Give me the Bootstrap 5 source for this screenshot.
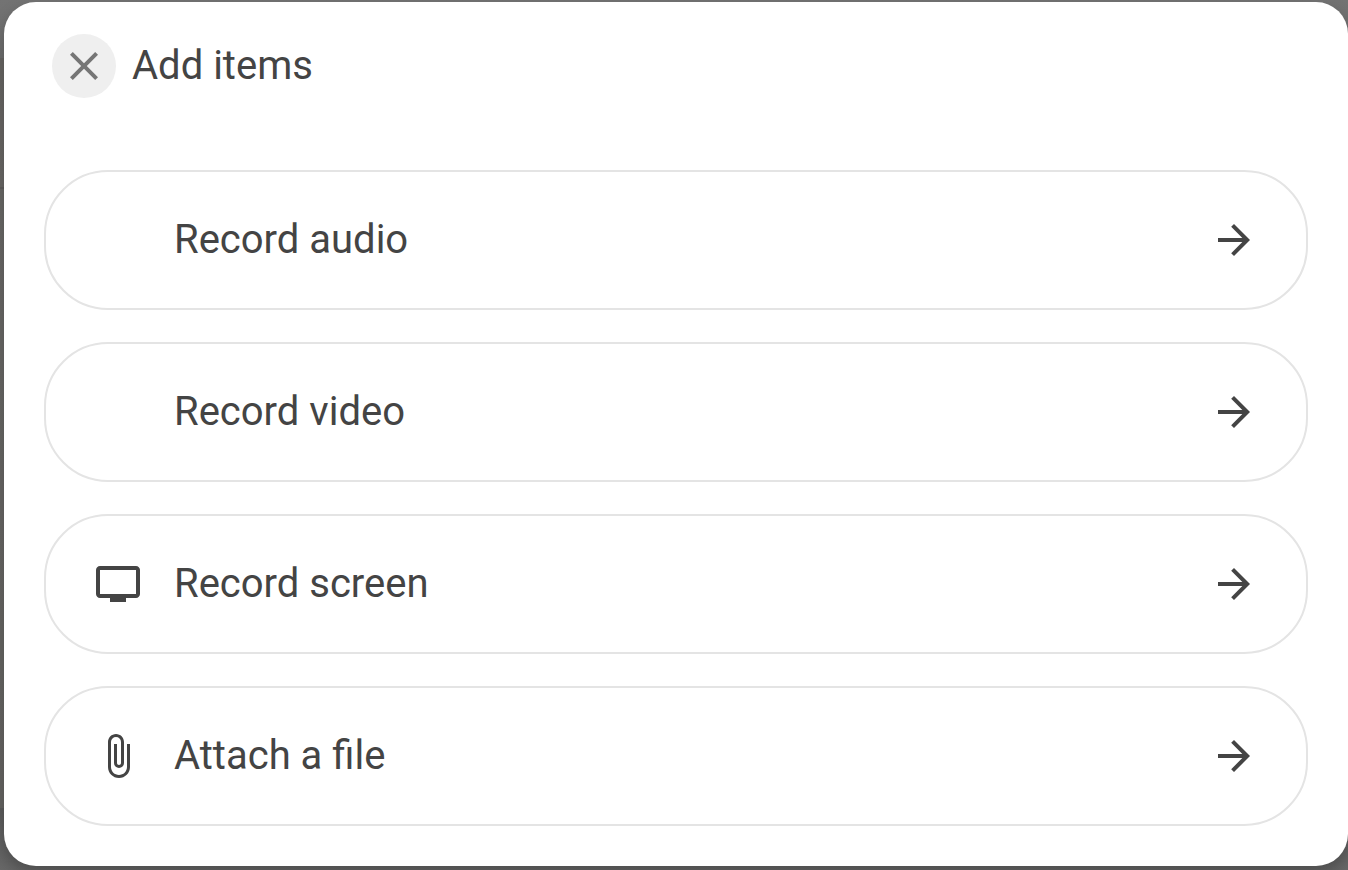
<!DOCTYPE html>
<html lang="en">
<head>
<meta charset="utf-8">
<meta name="viewport" content="width=device-width, initial-scale=1">
<title>Add items</title>
<link href="https://cdn.jsdelivr.net/npm/bootstrap@5.3.0/dist/css/bootstrap.min.css" rel="stylesheet">
<style>
  body {
    font-family: Roboto, "Liberation Sans", sans-serif;
    font-size: 40px;
    line-height: 48px;
    color: #444;
    background: linear-gradient(#737373 0, #6e6e6e 58px, #686664 58px, #6a6866 187px, #605e5d 187px, #605e5d 189px, #6a6967 189px, #666563 808px, #5c5c5c 808px, #686868 100%);
  }
  .sheet { margin: 2px 0 4px 4px; padding: 32px 40px 40px; border-radius: 32px; box-shadow: 0 8px 16px rgba(0, 0, 0, .25); }
  .sheet-head { padding-left: 8px; margin-bottom: 72px; }
  .sheet-title { font-size: 40px; line-height: 48px; font-weight: 400; }
  .close-btn { width: 64px; height: 64px; background: #efefef; color: #757575; }
  .option-list { gap: 32px; }
  .option {
    gap: 32px;
    padding: 44px 48px;
    border: 2px solid #e4e4e4;
    border-radius: 64px;
    color: #444;
  }
  .glyph { width: 48px; height: 48px; fill: currentColor; }
</style>
</head>
<body class="min-vh-100">
<svg class="d-none">
  <symbol id="arrow" viewBox="0 0 24 24"><path d="M12 4l-1.41 1.41L16.17 11H4v2h12.17l-5.58 5.59L12 20l8-8z"/></symbol>
</svg>
<div class="overflow-hidden">
<main class="sheet bg-white" role="dialog" aria-labelledby="title">
  <header class="sheet-head d-flex align-items-center gap-3">
    <button type="button" class="close-btn btn border-0 rounded-circle p-0 d-flex align-items-center justify-content-center" aria-label="Close">
      <svg class="glyph" viewBox="0 0 24 24"><path d="M19 6.41L17.59 5 12 10.59 6.41 5 5 6.41 10.59 12 5 17.59 6.41 19 12 13.41 17.59 19 19 17.59 13.41 12z"/></svg>
    </button>
    <h1 class="sheet-title mb-0" id="title">Add items</h1>
  </header>
  <div class="option-list d-flex flex-column">
    <button type="button" class="option bg-white d-flex align-items-center text-start">
      <span class="glyph flex-shrink-0"></span>
      <span class="flex-grow-1">Record audio</span>
      <svg class="glyph flex-shrink-0"><use href="#arrow"/></svg>
    </button>
    <button type="button" class="option bg-white d-flex align-items-center text-start">
      <span class="glyph flex-shrink-0"></span>
      <span class="flex-grow-1">Record video</span>
      <svg class="glyph flex-shrink-0"><use href="#arrow"/></svg>
    </button>
    <button type="button" class="option bg-white d-flex align-items-center text-start">
      <svg class="glyph flex-shrink-0" viewBox="0 0 24 24"><path d="M21 3H3c-1.100 0-2 .9-2 2v12c0 1.100.9 2 2 2h5v2h8v-2h5c1.100 0 2-.9 2-2V5c0-1.100-.9-2-2-2zm0 14H3V5h18z"/></svg>
      <span class="flex-grow-1">Record screen</span>
      <svg class="glyph flex-shrink-0"><use href="#arrow"/></svg>
    </button>
    <button type="button" class="option bg-white d-flex align-items-center text-start">
      <svg class="glyph flex-shrink-0" viewBox="0 0 24 24"><path d="M16.500 6v11.500c0 2.210-1.790 4-4 4s-4-1.790-4-4V5a2.500 2.500 0 0 1 5 0v10.500c0 .55-.45 1-1 1s-1-.45-1-1V6H10v9.500a2.500 2.500 0 0 0 5 0V5c0-2.210-1.790-4-4-4S7 2.790 7 5v12.500c0 3.040 2.460 5.500 5.500 5.500s5.500-2.460 5.500-5.500V6z"/></svg>
      <span class="flex-grow-1">Attach a file</span>
      <svg class="glyph flex-shrink-0"><use href="#arrow"/></svg>
    </button>
  </div>
</main>
</div>
<script src="https://cdn.jsdelivr.net/npm/bootstrap@5.3.0/dist/js/bootstrap.bundle.min.js"></script>
</body>
</html>
